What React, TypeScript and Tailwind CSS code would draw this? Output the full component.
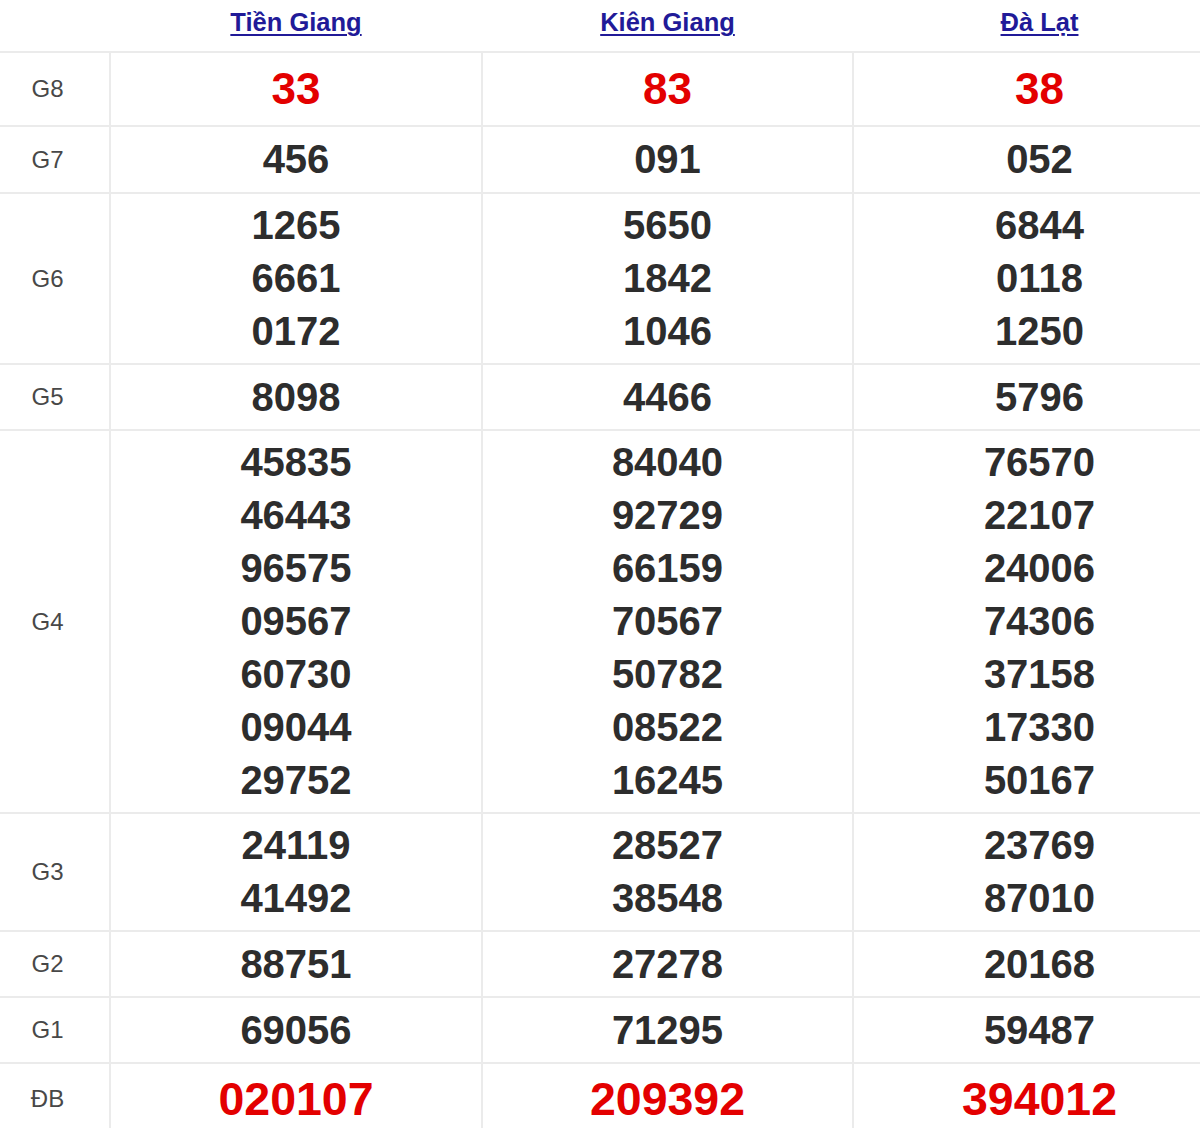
import React from 'react';

type Row = {
  label: string;
  values: string[][];
  kind?: 'g8' | 'g7' | 'single' | 'db';
};

const provinces = ['Tiền Giang', 'Kiên Giang', 'Đà Lạt'];

const rows: Row[] = [
  { label: 'G8', kind: 'g8', values: [['33'], ['83'], ['38']] },
  { label: 'G7', kind: 'g7', values: [['456'], ['091'], ['052']] },
  {
    label: 'G6',
    values: [
      ['1265', '6661', '0172'],
      ['5650', '1842', '1046'],
      ['6844', '0118', '1250'],
    ],
  },
  { label: 'G5', kind: 'single', values: [['8098'], ['4466'], ['5796']] },
  {
    label: 'G4',
    values: [
      ['45835', '46443', '96575', '09567', '60730', '09044', '29752'],
      ['84040', '92729', '66159', '70567', '50782', '08522', '16245'],
      ['76570', '22107', '24006', '74306', '37158', '17330', '50167'],
    ],
  },
  {
    label: 'G3',
    values: [
      ['24119', '41492'],
      ['28527', '38548'],
      ['23769', '87010'],
    ],
  },
  { label: 'G2', kind: 'single', values: [['88751'], ['27278'], ['20168']] },
  { label: 'G1', kind: 'single', values: [['69056'], ['71295'], ['59487']] },
  { label: 'ĐB', kind: 'db', values: [['020107'], ['209392'], ['394012']] },
];

const styleFor = (kind?: Row['kind']) => {
  switch (kind) {
    case 'g8':
      return 'leading-[62px] text-[44px] text-[#e30000]';
    case 'db':
      return 'leading-[60px] text-[46.5px] text-[#e30000]';
    case 'g7':
      return 'leading-[55px] text-[40px] text-[#2d2d2d]';
    case 'single':
      return 'leading-[54px] text-[40px] text-[#2d2d2d]';
    default:
      return 'leading-[53px] text-[40px] text-[#2d2d2d]';
  }
};

export default function App() {
  return (
    <div
      className="w-[1200px] overflow-hidden bg-white"
      style={{ fontFamily: '"Liberation Sans", Arial, sans-serif' }}
    >
      <table className="w-[1226px] table-fixed border-collapse">
        <colgroup>
          <col className="w-[110px]" />
          <col className="w-[372px]" />
          <col className="w-[371px]" />
          <col className="w-[373px]" />
        </colgroup>
        <thead>
          <tr className="border-b-2 border-[#ebebeb]">
            <th className="h-[52px] pb-[6px]"></th>
            {provinces.map((p) => (
              <th key={p} className="h-[52px] pb-[6px] text-center align-middle">
                <a
                  href="#"
                  className="text-[25.5px] font-bold text-[#211a98] underline decoration-2 underline-offset-[3px]"
                >
                  {p}
                </a>
              </th>
            ))}
          </tr>
        </thead>
        <tbody>
          {rows.map((row) => (
            <tr key={row.label} className="border-b-2 border-[#ebebeb]">
              <td className="border-r-2 border-[#ebebeb] py-[5px] pr-[14px] text-center align-middle text-[24px] text-[#484848]">
                {row.label}
              </td>
              {row.values.map((nums, i) => (
                <td
                  key={i}
                  className={`border-r-2 border-[#ebebeb] py-[5px] text-center align-middle font-bold ${styleFor(row.kind)}`}
                >
                  {nums.map((n, j) => (
                    <div key={j}>{n}</div>
                  ))}
                </td>
              ))}
            </tr>
          ))}
        </tbody>
      </table>
    </div>
  );
}
